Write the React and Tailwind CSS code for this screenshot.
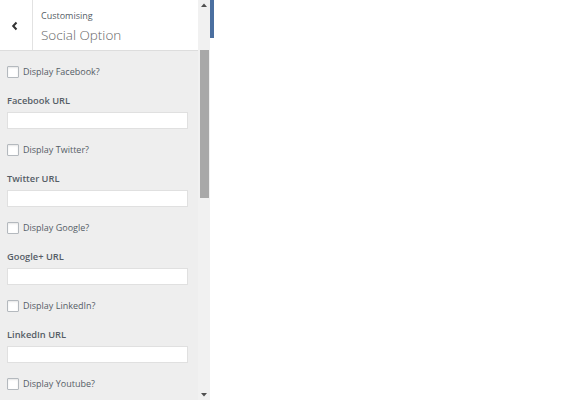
import React from "react";

const items = [
  { check: "Display Facebook?", label: "Facebook URL" },
  { check: "Display Twitter?", label: "Twitter URL" },
  { check: "Display Google?", label: "Google+ URL" },
  { check: "Display LinkedIn?", label: "LinkedIn URL" },
  { check: "Display Youtube?", label: null },
];

function Check({ text }) {
  return (
    <div className="flex items-center h-[12px] pl-[7px]">
      <span className="block w-[12px] h-[12px] bg-white border border-[#b4b9be] rounded-[1px] shadow-[inset_0_1px_2px_rgba(0,0,0,0.1)]" />
      <span className="ml-[4px] text-[9px] leading-[12px] text-[#555d66]">{text}</span>
    </div>
  );
}

export default function App() {
  return (
    <div
      className="w-[580px] h-[400px] bg-white flex overflow-hidden"
      style={{ fontFamily: '"Open Sans", "Noto Sans", sans-serif' }}
    >
      <div className="w-[198px] h-full flex flex-col">
        <div className="h-[51px] bg-white border-b border-[#dddddd] flex shrink-0">
          <div className="w-[33px] h-full border-r border-[#e2e2e2] flex items-center pl-[11px] pt-[2px]">
            <svg width="8" height="10" viewBox="0 0 8 10">
              <path d="M5.5 1.5 L2.2 5 L5.5 8.5" fill="none" stroke="#333" strokeWidth="2" />
            </svg>
          </div>
          <div className="pl-[8px] pt-[10px]">
            <div className="text-[9px] leading-[12px] text-[#555d66]">Customising</div>
            <div className="text-[13.5px] leading-[20px] mt-[3px] text-[#666] font-light">Social Option</div>
          </div>
        </div>
        <div className="flex-1 bg-[#eeeeee] pt-[15px] overflow-hidden">
          {items.map((it) => (
            <div key={it.check} className="pb-[15px]">
              <Check text={it.check} />
              {it.label && (
                <>
                  <div className="mt-[17px] pl-[7px] text-[9.3px] leading-[12px] font-semibold text-[#555d66]">{it.label}</div>
                  <div className="mt-[5px] ml-[7px] w-[181px] h-[17px] bg-white border border-[#e0e0e0]" />
                </>
              )}
            </div>
          ))}
        </div>
      </div>
      <div className="w-[12px] h-full bg-[#f1f1f1] flex flex-col items-center relative">
        <div className="h-[10px] flex items-center justify-center">
          <svg width="6" height="4" viewBox="0 0 6 4"><path d="M0 4 L3 0.5 L6 4 Z" fill="#505050" /></svg>
        </div>
        <div className="mt-[40px] w-[9px] h-[148px] bg-[#a8a8a8]" />
        <div className="flex-1" />
        <div className="h-[10px] flex items-center justify-center">
          <svg width="6" height="4" viewBox="0 0 6 4"><path d="M0 0 L3 3.5 L6 0 Z" fill="#505050" /></svg>
        </div>
      </div>
      <div className="w-[4px] h-[38px] bg-[#4b6fa0]" />
    </div>
  );
}
